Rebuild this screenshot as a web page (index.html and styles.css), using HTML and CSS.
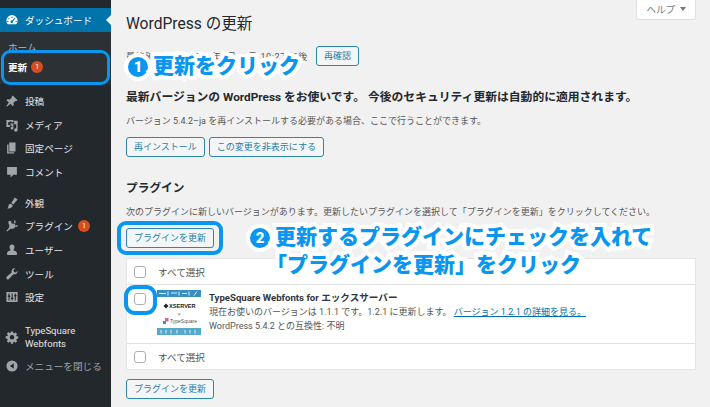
FILE: index.html
```html
<!DOCTYPE html>
<html lang="ja">
<head>
    <meta charset="UTF-8">
    <title>WordPress の更新</title>
    <link rel="stylesheet" href="styles.css">
</head>
<body>
    <div class="layout">
        <!-- Sidebar -->
        <nav class="sidebar">
            <div class="menu-item current">
                <svg class="icon" viewBox="0 0 20 20"><path d="M10 3a8 8 0 0 0-8 8c0 2 .8 3.900 2 5h12c1.200-1.100 2-3 2-5a8 8 0 0 0-8-8zM10 5a1 1 0 1 1 0 2 1 1 0 0 1 0-2zM5.500 7a1 1 0 1 1 0 2 1 1 0 0 1 0-2zM4 11a1 1 0 1 1 0 2 1 1 0 0 1 0-2zM16 11a1 1 0 1 1 0 2 1 1 0 0 1 0-2zM14 6.500l1 .8-3.600 4.400a1.800 1.800 0 1 1-1.200-1z" fill-rule="evenodd"/></svg>
                <span>ダッシュボード</span>
            </div>
            <div class="submenu">
                <div class="sub-item">ホーム</div>
                <div class="sub-item active">更新 <span class="badge">1</span></div>
            </div>
            <div class="menu-group">
                <div class="menu-item">
                    <svg class="icon" viewBox="0 0 20 20"><path d="M11 2l7 7-1.500 1-1-.5-3.500 3 .5 3.500-1.500 1.500-3-3.500L3 18l-1 0 0-1 3.500-5-3.500-3L3.500 7.500 7 8l3-3.500-.5-1z"/></svg>
                    <span>投稿</span>
                </div>
                <div class="menu-item">
                    <svg class="icon" viewBox="0 0 20 20"><path d="M2 3h10v3H9.500a1.500 1.500 0 0 0-3 0H4.500v4H7v3H2zM13 4h5v13a2.500 2.500 0 1 1-2-2.400V9h-3zM8 8h4v6.500a2 2 0 1 1-1.500-1.900V11H8z" fill-rule="evenodd"/></svg>
                    <span>メディア</span>
                </div>
                <div class="menu-item">
                    <svg class="icon" viewBox="0 0 20 20"><path d="M6 2h9v13H6zM3 5h2v11h8v2H3z"/></svg>
                    <span>固定ページ</span>
                </div>
                <div class="menu-item">
                    <svg class="icon" viewBox="0 0 20 20"><path d="M3 3h14v11h-5l-4 4v-4H3z"/></svg>
                    <span>コメント</span>
                </div>
            </div>
            <div class="menu-group second">
                <div class="menu-item">
                    <svg class="icon" viewBox="0 0 20 20"><path d="M14 2l4 3-6 7-3-2zM8 11l3 2c0 3-2 5-8 5 2-1 1.500-3 2-4.500S6.500 11 8 11z"/></svg>
                    <span>外観</span>
                </div>
                <div class="menu-item">
                    <svg class="icon" viewBox="0 0 20 20"><path d="M13 2h2v4h-2zM5 3l4 0 0 3 5 1 1 4-3 3-4 0-5 4-1-1 4-5 0-4L5 7zM15 9h3v2h-3z"/></svg>
                    <span>プラグイン</span>
                    <span class="badge">1</span>
                </div>
                <div class="menu-item">
                    <svg class="icon" viewBox="0 0 20 20"><path d="M10 2a3.500 4 0 0 1 3.500 4c0 2-1 3.500-1.800 4.200 2.500.6 5.300 1.800 5.300 3.800v3H3v-3c0-2 2.800-3.200 5.300-3.800C7.500 9.500 6.500 8 6.500 6A3.500 4 0 0 1 10 2z"/></svg>
                    <span>ユーザー</span>
                </div>
                <div class="menu-item">
                    <svg class="icon" viewBox="0 0 20 20"><path d="M18 6a4.500 4.500 0 0 1-6 4.200L5.500 17a2 2 0 0 1-3-3L9.500 8A4.500 4.500 0 0 1 14.500 2L12 4.500 13 7l2.500 1L18 5.500z"/></svg>
                    <span>ツール</span>
                </div>
                <div class="menu-item">
                    <svg class="icon" viewBox="0 0 20 20"><path d="M2 3h16v14H2zM5 5v3H4v2h1v5h1.500v-5h1V8h-1V5zM9.500 5v6h-1v2h1v2H11v-2h1v-2h-1V5zM14 5v2h-1v2h1v6h1.500V9h1V7h-1V5z" fill-rule="evenodd"/></svg>
                    <span>設定</span>
                </div>
            </div>
            <div class="menu-item tall">
                <svg class="icon" viewBox="0 0 20 20"><path d="M8.500 2h3l.4 2.300 1.300.5L15.200 3.500l2.100 2.100-1.300 2 .6 1.300 2.400.4v3l-2.400.4-.6 1.300 1.300 2-2.100 2.100-2-1.300-1.300.5-.4 2.200h-3l-.4-2.200-1.300-.5-2 1.300-2.100-2.100 1.300-2-.6-1.300L1 11.800v-3l2.400-.4.600-1.300-1.300-2 2.100-2.100 2 1.300 1.300-.5zM10 7a3.300 3.300 0 1 0 0 6.600A3.300 3.300 0 0 0 10 7z" fill-rule="evenodd"/></svg>
                <span>TypeSquare<br>Webfonts</span>
            </div>
            <div class="menu-item collapse">
                <svg class="icon" viewBox="0 0 20 20"><path d="M10 2a8 8 0 1 1 0 16 8 8 0 0 1 0-16zM12.500 6L7 10l5.500 4z" fill-rule="evenodd"/></svg>
                <span>メニューを閉じる</span>
            </div>
        </nav>

        <!-- Main content -->
        <main class="content">
            <div class="title-row">
                <h1>WordPress の更新</h1>
                <div class="help-tab">ヘルプ <span class="help-arrow"></span></div>
            </div>

            <div class="check-row">
                <span class="check-time">最終確認日時: 2020年7月27日 10:27 午後</span>
                <button class="btn small">再確認</button>
            </div>

            <h2 class="latest">最新バージョンの WordPress をお使いです。 今後のセキュリティ更新は自動的に適用されます。</h2>
            <p class="note">バージョン 5.4.2–ja を再インストールする必要がある場合、ここで行うことができます。</p>
            <div class="btn-row">
                <button class="btn">再インストール</button>
                <button class="btn">この変更を非表示にする</button>
            </div>

            <h2 class="plugins">プラグイン</h2>
            <p class="note plugin-note">次のプラグインに新しいバージョンがあります。更新したいプラグインを選択して「プラグインを更新」をクリックしてください。</p>
            <button class="btn">プラグインを更新</button>

            <div class="plugin-table">
                <label class="table-row select-row"><span class="check"></span>すべて選択</label>
                <div class="table-row plugin-row">
                    <span class="check"></span>
                    <svg class="plugin-icon" viewBox="0 0 44 45">
                        <rect width="44" height="45" fill="#fff"/>
                        <rect width="44" height="7" fill="#3a8fc2"/>
                        <path d="M2 3.500h7M11 1.500v4M14 3h6M22 1.500v4M25 3.500h5M32 1.500v4M37 5.500l3-4" stroke="#dcedf6" fill="none"/>
                        <rect y="38" width="44" height="7" fill="#55a8cc"/>
                        <path d="M4 40v3.500M9 40v3.500M14 40v3.500M20 40v3.500M28 40v3.500M33 40v3.500M38 40v3.500" stroke="#e2f1f8" fill="none"/>
                        <path d="M9 13.500l2.500 2.500L9 18.500 6.500 16z" fill="#222"/>
                        <text x="12" y="18" class="logo-x">XSERVER</text>
                        <text x="22" y="26" class="logo-by">×</text>
                        <rect x="6" y="31" width="3" height="3" fill="#2f8fd8"/>
                        <rect x="8" y="28" width="3.500" height="3.500" fill="#e35ea0"/>
                        <text x="13" y="33" class="logo-t">TypeSquare</text>
                    </svg>
                    <div class="plugin-info">
                        <strong>TypeSquare Webfonts for エックスサーバー</strong>
                        <div>現在お使いのバージョンは 1.1.1 です。1.2.1 に更新します。 <a href="#">バージョン 1.2.1 の詳細を見る。</a></div>
                        <div>WordPress 5.4.2 との互換性: 不明</div>
                    </div>
                </div>
                <label class="table-row select-row"><span class="check"></span>すべて選択</label>
            </div>
            <button class="btn">プラグインを更新</button>
        </main>
    </div>

    <!-- Annotations over the screenshot -->
    <div class="hl hl-menu"></div>
    <div class="hl hl-btn"></div>
    <div class="hl hl-check"></div>

    <div class="note-label label-one"><span class="num">1</span>更新をクリック</div>
    <div class="note-label label-two">
        <div><span class="num">2</span>更新するプラグインにチェックを入れて</div>
        <div class="label-second">「プラグインを更新」をクリック</div>
    </div>
</body>
</html>
```

FILE: styles.css
```css
* {
    box-sizing: border-box;
}

html, body {
    margin: 0;
    padding: 0;
    height: 100%;
    overflow: hidden;
}

body {
    position: relative;
    font-family: Roboto, "Noto Sans CJK JP", sans-serif;
    font-size: 9.6px;
    color: #555;
    background-color: #f1f1f1;
}

.layout {
    display: flex;
    height: 407px;
}

/* Sidebar */
.sidebar {
    width: 111px;
    flex-shrink: 0;
    padding-top: 8px;
    background-color: #23282d;
    color: #e4e6e8;
}

.menu-item {
    display: flex;
    align-items: center;
    height: 23.7px;
    position: relative;
}

.menu-item .icon {
    width: 14px;
    height: 14px;
    margin: 0 6px 0 5px;
    flex-shrink: 0;
    fill: #a0a5aa;
}

.menu-item.current {
    height: 24px;
    background-color: #0073aa;
    color: #fff;
}

.menu-item.current .icon {
    fill: #fff;
}

.menu-item.current::after {
    content: "";
    position: absolute;
    right: 0;
    top: 7px;
    border: 5px solid transparent;
    border-right-color: #f1f1f1;
    border-left-width: 0;
}

.submenu {
    height: 52px;
    padding: 5px 0 0 8px;
    background-color: #2c3136;
    color: #b4b9be;
}

.sub-item {
    display: flex;
    align-items: center;
    gap: 4px;
    height: 20px;
}

.sub-item.active {
    color: #fff;
    font-weight: 700;
}

.menu-group {
    margin-top: 5px;
}

.menu-group.second {
    margin-top: 7px;
}

.menu-item.tall {
    height: 27px;
    margin-top: 14px;
    line-height: 13px;
}

.menu-item.collapse {
    margin-top: 4px;
    color: #a0a5aa;
}

.badge {
    display: inline-block;
    width: 12px;
    height: 12px;
    margin-left: 5px;
    border-radius: 50%;
    background-color: #d54e21;
    color: #fff;
    font-size: 7px;
    font-weight: 400;
    line-height: 12px;
    text-align: center;
}

.sub-item .badge {
    margin-left: 0;
}

/* Main content */
.content {
    flex: 1;
    padding: 0 14px 0 15px;
}

.title-row {
    display: flex;
    justify-content: space-between;
    align-items: flex-start;
    height: 46px;
}

h1 {
    margin: 13px 0 0;
    font-size: 15.6px;
    font-weight: 400;
    line-height: 22px;
    color: #23282d;
}

.help-tab {
    width: 60px;
    height: 20px;
    background-color: #fff;
    border: 1px solid #e1e1e1;
    border-top: 0;
    border-radius: 0 0 3px 3px;
    color: #72777c;
    font-size: 9.6px;
    line-height: 20px;
    text-align: center;
}

.help-arrow {
    display: inline-block;
    margin-left: 2px;
    vertical-align: 2px;
    border: 3px solid transparent;
    border-top: 4px solid #72777c;
    border-bottom: 0;
}

.check-row {
    display: flex;
    align-items: center;
    gap: 8px;
    height: 20px;
    font-size: 9px;
}

.check-time {
    letter-spacing: 0.6px;
}

h2 {
    margin: 0;
    font-weight: 700;
    color: #23282d;
}

.latest {
    margin-top: 23px;
    font-size: 11.8px;
    line-height: 16px;
    white-space: nowrap;
}

.note {
    margin: 8px 0 0;
    font-size: 9px;
    line-height: 16px;
    white-space: nowrap;
}

.btn {
    display: block;
    height: 20px;
    padding: 0 7px;
    background-color: #f3f5f6;
    border: 1px solid #2a87ad;
    border-radius: 3px;
    color: #1f7ea6;
    font-family: inherit;
    font-size: 9px;
    line-height: 17px;
}

.btn-row {
    display: flex;
    gap: 4px;
    margin-top: 8px;
}

.plugins {
    margin-top: 23px;
    font-size: 11.7px;
    line-height: 16px;
}

.plugin-note {
    margin-top: 8px;
    margin-bottom: 8px;
}

/* Plugin table */
.plugin-table {
    margin: 10px 0 9px;
    background-color: #fff;
    border: 1px solid #e5e5e5;
}

.table-row {
    display: flex;
    align-items: center;
    padding-left: 7px;
}

.select-row {
    height: 25px;
    font-size: 9.6px;
}

.plugin-row {
    align-items: flex-start;
    height: 60px;
    padding-top: 5px;
    border-top: 1px solid #e1e1e1;
    border-bottom: 1px solid #e1e1e1;
}

.check {
    width: 12px;
    height: 12px;
    margin-right: 12px;
    flex-shrink: 0;
    background-color: #fff;
    border: 1px solid #a9aeb3;
    border-radius: 3px;
}

.plugin-row .check {
    margin: 3px 11px 0 0;
}

.plugin-icon {
    width: 44px;
    height: 45px;
    flex-shrink: 0;
    margin-right: 8px;
}

.logo-x {
    font-family: "Liberation Sans", sans-serif;
    font-size: 5.6px;
    font-weight: 700;
    fill: #222;
}

.logo-by {
    font-size: 6px;
    fill: #888;
    text-anchor: middle;
}

.logo-t {
    font-family: "Liberation Sans", sans-serif;
    font-size: 5px;
    fill: #555;
}

.plugin-info {
    padding-top: 1px;
    font-size: 9px;
    line-height: 14px;
    white-space: nowrap;
}

.plugin-info strong {
    display: block;
    font-size: 9.6px;
    color: #32373c;
}

.plugin-info a {
    color: #0073aa;
}

/* Annotations */
.hl {
    position: absolute;
    border: 3px solid #0a96ee;
    border-radius: 9px;
}

.hl-menu {
    left: 1px;
    top: 50px;
    width: 109px;
    height: 35px;
}

.hl-btn {
    left: 117px;
    top: 221px;
    width: 106px;
    height: 34px;
    border-width: 4px;
}

.hl-check {
    left: 124px;
    top: 285px;
    width: 33px;
    height: 30px;
    border-width: 4px;
    border-radius: 11px;
}

.note-label {
    position: absolute;
    color: #0a96ee;
    font-size: 21px;
    font-weight: 900;
    line-height: 28px;
    white-space: nowrap;
    -webkit-text-stroke: 8px #fff;
    paint-order: stroke fill;
}

.label-one {
    left: 128px;
    top: 52px;
}

.label-two {
    left: 250px;
    top: 223px;
}

.label-second {
    margin-left: 16px;
}

.num {
    display: inline-block;
    width: 20px;
    height: 20px;
    margin-right: 5px;
    border-radius: 50%;
    background-color: #0a96ee;
    box-shadow: 0 0 0 4px #fff;
    color: #fff;
    font-size: 15px;
    line-height: 20px;
    text-align: center;
    vertical-align: 1px;
    -webkit-text-stroke: 0;
}
```
